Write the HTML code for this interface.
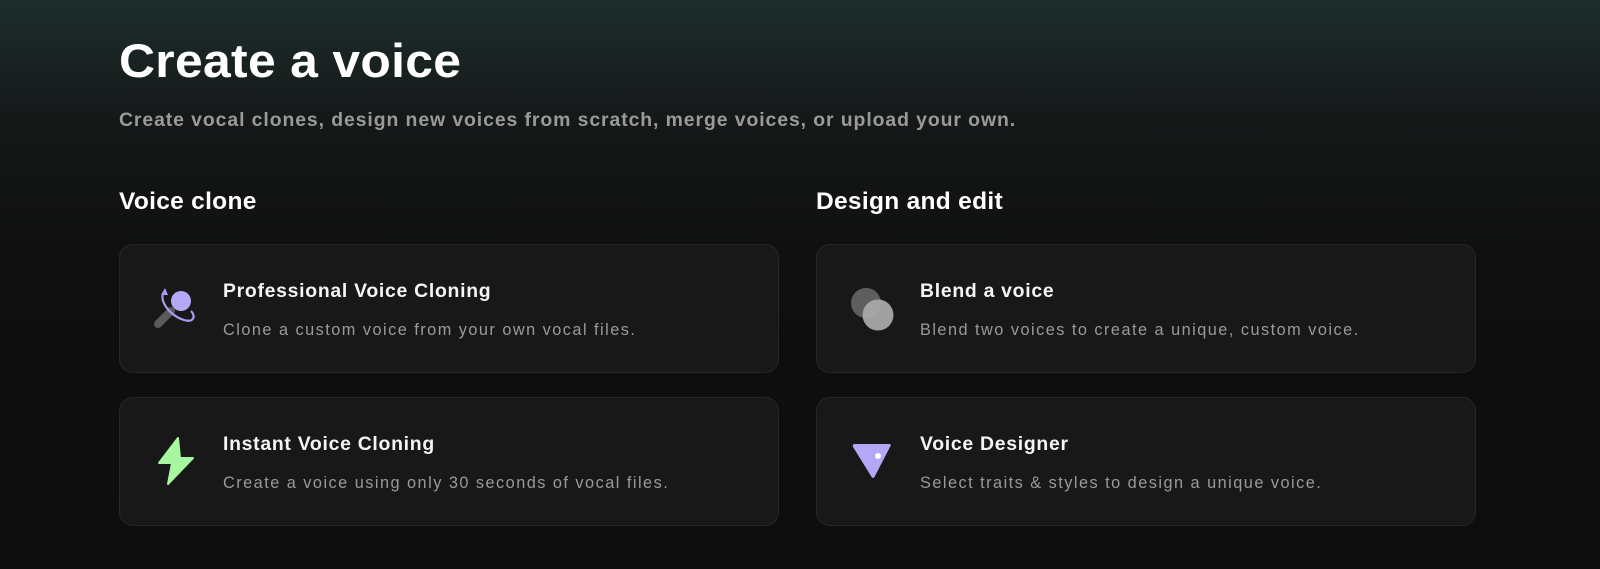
<!DOCTYPE html>
<html><head><meta charset="utf-8"><style>
*{margin:0;padding:0;box-sizing:border-box}
body{width:1600px;height:569px;overflow:hidden;font-family:"Liberation Sans",sans-serif;background:linear-gradient(180deg,#1e2d2d 0px,#161919 112px,#0f0f0f 265px,#0d0d0d 569px);color:#fff;position:relative}
h1{position:absolute;left:119px;top:33px;font-size:47px;font-weight:bold;letter-spacing:0.3px;transform:scaleX(1.06);transform-origin:left}
.sub{position:absolute;left:119px;top:109px;font-size:19.4px;color:#9a9a9a;letter-spacing:0.92px;font-weight:bold}
.h2{position:absolute;top:188px;font-size:24.5px;font-weight:bold;letter-spacing:0.3px}
.card{position:absolute;width:660px;height:129px;background:#181818;border:1px solid #262828;border-radius:14px}
.card .t{position:absolute;left:103px;top:35px;font-size:19.4px;font-weight:bold;color:#f4f4f4;letter-spacing:0.72px}
.card .d{position:absolute;left:103px;top:76px;font-size:16.3px;color:#9a9a9a;letter-spacing:1.48px}
.card svg{position:absolute;left:28px;top:33px}
</style></head><body>
<h1>Create a voice</h1>
<div class="sub">Create vocal clones, design new voices from scratch, merge voices, or upload your own.</div>
<div class="h2" style="left:119px">Voice clone</div>
<div class="h2" style="left:816px">Design and edit</div>

<div class="card" style="left:119px;top:244px">
<svg width="70" height="70" viewBox="0 0 70 70">
<path d="M10 46 L23 33" stroke="#5a5a5a" stroke-width="8" stroke-linecap="round"/>
<circle cx="33" cy="23" r="10" fill="#b3a8f5"/>
<path d="M16 14 C10 22 22 38 36 42 C46 45 48 38 43 33" stroke="#a79cf0" stroke-width="2.2" fill="none"/>
<path d="M13 17 L17 10 L20 17 Z" fill="#a79cf0"/>
</svg>
<div class="t">Professional Voice Cloning</div>
<div class="d">Clone a custom voice from your own vocal files.</div>
</div>

<div class="card" style="left:119px;top:397px">
<svg width="70" height="70" viewBox="0 0 70 70">
<path d="M30 7 L11 32 L24 32 L20 53 L45 27 L32 27 Z" fill="#a6f7a0" stroke="#a6f7a0" stroke-width="2" stroke-linejoin="round"/>
</svg>
<div class="t">Instant Voice Cloning</div>
<div class="d">Create a voice using only 30 seconds of vocal files.</div>
</div>

<div class="card" style="left:816px;top:244px">
<svg width="70" height="70" viewBox="0 0 70 70">
<circle cx="21" cy="25" r="15" fill="#5e5e5e"/>
<circle cx="33" cy="37" r="15.5" fill="#a8a8a8" opacity="0.95"/>
</svg>
<div class="t">Blend a voice</div>
<div class="d">Blend two voices to create a unique, custom voice.</div>
</div>

<div class="card" style="left:816px;top:397px">
<svg width="70" height="70" viewBox="0 0 70 70">
<path d="M10 13 L44 13 Q47 13 45 16 L30 45 Q28 49 26 45 L8 16 Q7 13 10 13 Z" fill="#b3a8f5"/>
<circle cx="33" cy="25" r="3" fill="#fff"/>
</svg>
<div class="t">Voice Designer</div>
<div class="d">Select traits &amp; styles to design a unique voice.</div>
</div>
</body></html>
